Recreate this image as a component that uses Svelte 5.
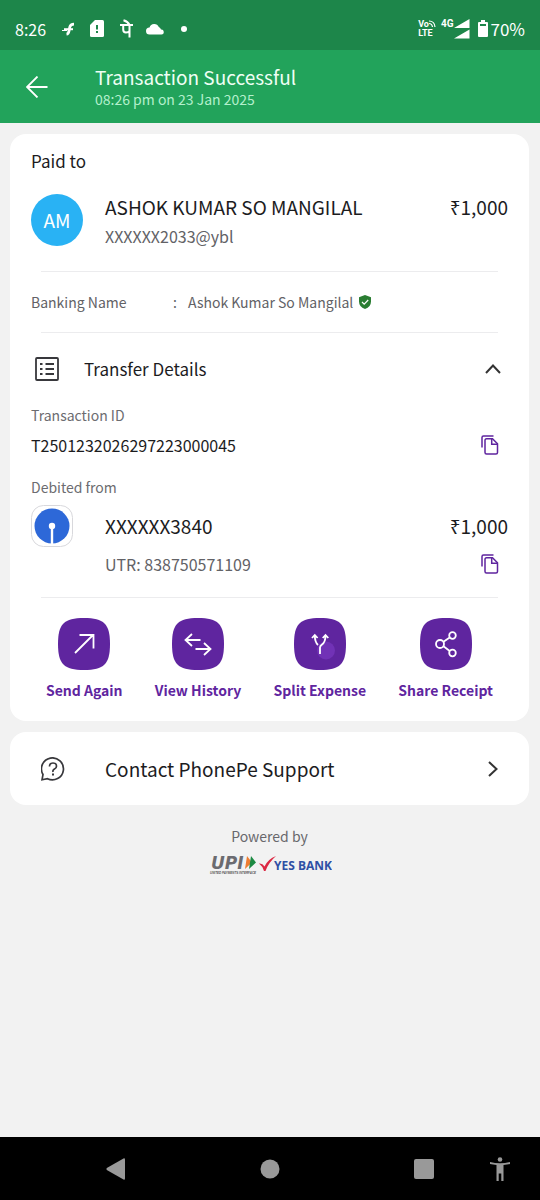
<script lang="ts">
  let open = $state(true);

  const actions = [
    { id: "send", label: "Send Again" },
    { id: "history", label: "View History" },
    { id: "split", label: "Split Expense" },
    { id: "share", label: "Share Receipt" },
  ];
</script>

{#snippet copyIcon()}
  <svg width="18" height="20" viewBox="0 0 18 20" fill="none" stroke="#5f259f" stroke-width="1.5">
    <path d="M1 12.500V2.500Q1 1 2.500 1H12.500" />
    <path d="M5.500 3.800H11.500L16.500 8.800V17.500Q16.500 19 15 19H5.500Q4 19 4 17.500V5.300Q4 3.800 5.500 3.800Z" />
    <path d="M10.700 4V9.300H16.300" />
  </svg>
{/snippet}

<div class="screen">
  <div class="status">
    <span class="clock">8:26</span>
    <svg width="14" height="14" viewBox="0 0 14 14" fill="none" stroke="#fff">
      <path d="M4.500 12.200Q6.500 12 7 9L7.800 5Q8.500 2.200 12 2.200" stroke-width="2.800" />
      <path d="M2 7.200H11" stroke-width="2" />
      <path d="M0 8.500H5" stroke-width="1" />
    </svg>
    <svg class="sim" width="14" height="17" viewBox="0 0 14 17">
      <path d="M5 0H12.500Q14 0 14 1.500V15.500Q14 17 12.500 17H1.500Q0 17 0 15.500V5Z" fill="#fff" />
      <path d="M7 5V9.500M7 11V13" stroke="#1d864a" stroke-width="2" />
    </svg>
    <svg class="pe" width="13" height="19" viewBox="0 0 13 19" fill="none" stroke="#fff" stroke-width="2">
      <path d="M0 6H13M9.500 6V18.500M3.200 6V10.500Q3.200 13.500 6 13.500 8.500 13.500 9.500 12M9.500 6Q8 2.500 3.500 1.200" />
    </svg>
    <svg class="cloud" width="18" height="12" viewBox="0 0 18 12" fill="#fff">
      <path d="M3.500 11.500A3.500 3.500 0 0 1 3.500 4.500 5 5 0 0 1 12.800 4 4 4 0 0 1 15 6.500 2.500 2.500 0 0 1 15.500 11.500Z" />
    </svg>
    <span class="dot"></span>
    <div class="signals">
      <div class="volte">
        <span>Vo<svg width="7" height="7" viewBox="0 0 7 7" fill="none" stroke="#fff" stroke-width="1.200"><path d="M0 1Q5.500 1 6 7M0 3.500Q3 3.500 3.500 7" /></svg></span>
        <span>LTE</span>
      </div>
      <span class="net">4G</span>
      <svg width="16" height="20" viewBox="0 0 16 20" fill="#fff">
        <path d="M0 9L15.500 0V9ZM0 19.500L15.500 10.500V19.500Z" />
      </svg>
      <svg class="battery" width="10" height="17" viewBox="0 0 10 17">
        <path d="M3 0H7V2H9Q10 2 10 3V16Q10 17 9 17H1Q0 17 0 16V3Q0 2 1 2H3Z" fill="#fff" />
        <path d="M2 4H8V6H2Z" fill="#1d864a" />
      </svg>
      <span class="level">70%</span>
    </div>
  </div>

  <header>
    <button class="back" aria-label="Back">
      <svg width="22" height="22" viewBox="0 0 22 22" fill="none" stroke="#fff" stroke-width="1.800">
        <path d="M21.500 11H1.500M11.500 .5L1 11 11.500 21.500" />
      </svg>
    </button>
    <div>
      <h1>Transaction Successful</h1>
      <p>08:26 pm on 23 Jan 2025</p>
    </div>
  </header>

  <main>
    <section class="card">
      <h2>Paid to</h2>
      <div class="row payee">
        <div class="avatar">AM</div>
        <div class="who">
          <div class="line">
            <span>ASHOK KUMAR SO MANGILAL</span>
            <span>₹1,000</span>
          </div>
          <div class="sub">XXXXXX2033@ybl</div>
        </div>
      </div>

      <hr />

      <div class="banking">
        <span class="key">Banking Name</span>
        <span>:</span>
        <span>Ashok Kumar So Mangilal</span>
        <svg width="12" height="14" viewBox="0 0 12 14">
          <path d="M6 0L12 2.200V6.500Q12 12 6 14Q0 12 0 6.500V2.200Z" fill="#2a7d32" />
          <path d="M3 7L5.200 9.200 9.200 5" fill="none" stroke="#fff" stroke-width="1.200" />
        </svg>
      </div>

      <hr />

      <button class="toggle" aria-expanded={open} onclick={() => (open = !open)}>
        <svg width="24" height="24" viewBox="0 0 24 24" fill="none" stroke="#38383c" stroke-width="1.800">
          <rect x="1" y="1" width="22" height="22" rx="1" />
          <path d="M5 7H7.500M5 12H7.500M5 17H7.500M10.500 7H19M10.500 12H19M10.500 17H19" />
        </svg>
        <span>Transfer Details</span>
        <svg class="chevron" class:closed={!open} width="16" height="10" viewBox="0 0 16 10" fill="none" stroke="#333" stroke-width="2">
          <path d="M1 9L8 1.500 15 9" />
        </svg>
      </button>

      {#if open}
        <div class="label">Transaction ID</div>
        <div class="txn">
          <span>T2501232026297223000045</span>
          <button class="copy" aria-label="Copy transaction ID">{@render copyIcon()}</button>
        </div>
        <div class="label">Debited from</div>
        <div class="row account">
          <svg class="bank" width="42" height="42" viewBox="0 0 42 42">
            <rect x=".5" y=".5" width="41" height="41" rx="12" fill="#fff" stroke="#d8d8dc" />
            <circle cx="21" cy="21" r="17.500" fill="#2d68d8" />
            <path d="M21 21V39" stroke="#fff" stroke-width="2.400" />
            <circle cx="21" cy="21" r="3.200" fill="#fff" />
          </svg>
          <div class="who">
            <div class="line">
              <span>XXXXXX3840</span>
              <span>₹1,000</span>
            </div>
            <div class="sub utr">
              <span>UTR: 838750571109</span>
              <button class="copy" aria-label="Copy UTR">{@render copyIcon()}</button>
            </div>
          </div>
        </div>
      {/if}

      <hr />

      <div class="actions">
        {#each actions as action (action.id)}
          <button>
            <svg width="52" height="52" viewBox="0 0 52 52" fill="none" stroke="#fff" stroke-width="1.800">
              <path d="M0 26C0 6 6 0 26 0S52 6 52 26 46 52 26 52 0 46 0 26Z" fill="#5f259f" stroke="none" />
              {#if action.id === "send"}
                <path d="M17 35L35 17M21.500 17H35.500V30.500" />
              {:else if action.id === "history"}
                <path d="M28.500 22H13.500M20 16L13.500 22 20 28M23.500 31H38.500M32 25L38.500 31 32 37" />
              {:else if action.id === "split"}
                <circle cx="32" cy="32.500" r="9" fill="#7132b6" stroke="none" />
                <path d="M26 36V29.500Q26 28 28 26.500Q31.500 24 31.500 17.500M24 27Q20.800 24 20.800 17.500M18 20L20.800 17 23.600 20M28.700 20L31.500 17 34.300 20" />
              {:else}
                <circle cx="20" cy="26" r="4" />
                <circle cx="32.500" cy="17.500" r="3.300" />
                <circle cx="32.500" cy="35" r="3.300" />
                <path d="M23.500 23.700L29.700 19.400M23.500 28.300L29.700 33" />
              {/if}
            </svg>
            <span>{action.label}</span>
          </button>
        {/each}
      </div>
    </section>

    <a class="card support" href="#support">
      <svg width="24" height="24" viewBox="0 0 24 24" fill="none" stroke="#38383c" stroke-width="1.700">
        <path d="M1 22.800L2 17.500A11 11 0 1 1 6.500 21.700Z" />
        <path d="M8.500 9.500Q8.500 6 12 6T15.500 9.200Q15.500 11 13.500 12T12 15" />
        <path d="M12 16.500V18.500" stroke-width="2" />
      </svg>
      <span>Contact PhonePe Support</span>
      <svg width="10" height="16" viewBox="0 0 10 16" fill="none" stroke="#333" stroke-width="2">
        <path d="M1 1L8.500 8 1 15" />
      </svg>
    </a>

    <footer>
      <div>Powered by</div>
      <svg width="124" height="24" viewBox="0 0 124 24">
        <text class="upi" x="3" y="16">UPI</text>
        <path d="M39 3L44 9.500 37 16Z" fill="#ee7d32" />
        <path d="M43 3L48 9.500 41 16Z" fill="#1c8a42" />
        <text class="tiny" x="2" y="21">UNITED PAYMENTS INTERFACE</text>
        <path d="M51 10.500Q54.500 10 56.500 13.500Q60 6 68 3Q60.500 9.500 57.500 18H56Q54.500 13 51 10.500Z" fill="#dc2843" />
        <text class="yes" x="66" y="17">YES BANK</text>
      </svg>
    </footer>
  </main>

  <nav>
    <button aria-label="Back">
      <svg width="20" height="22" viewBox="0 0 20 22" fill="#999">
        <path d="M.8 10L17.500 .4Q19 0 19 1.500V20.500Q19 22 17.500 21.600L.8 12Q0 11 .8 10Z" />
      </svg>
    </button>
    <button aria-label="Home">
      <svg width="20" height="20" viewBox="0 0 20 20" fill="#999"><circle cx="10" cy="10" r="9.500" /></svg>
    </button>
    <button aria-label="Recent apps">
      <svg width="20" height="20" viewBox="0 0 20 20" fill="#999"><rect width="20" height="20" rx="2" /></svg>
    </button>
    <button class="access" aria-label="Accessibility">
      <svg width="20" height="24" viewBox="0 0 20 24" fill="#999">
        <circle cx="10" cy="2.500" r="2.300" />
        <path d="M0 5Q10 7.500 20 5V7Q17 7.700 13.500 8V24H11.300V16.500H8.700V24H6.500V8Q3 7.700 0 7Z" />
      </svg>
    </button>
  </nav>
</div>

<style>
  :global(body) {
    margin: 0;
    background: #f2f2f2;
  }

  .screen {
    min-height: 100vh;
    display: flex;
    flex-direction: column;
    font-family: "Noto Sans CJK SC", "Noto Sans", sans-serif;
    font-size: 16px;
    line-height: 24px;
    color: #1c1c1e;
  }

  svg {
    display: block;
    flex: none;
  }

  button {
    padding: 0;
    border: none;
    background: none;
    font: inherit;
    color: inherit;
    cursor: pointer;
  }

  h1,
  h2,
  p {
    margin: 0;
    font-weight: 400;
  }

  .status {
    height: 50px;
    padding: 7px 15px 0;
    box-sizing: border-box;
    display: flex;
    align-items: center;
    background: #1d864a;
    color: #fff;
  }

  .clock {
    margin-right: 16px;
  }

  .sim {
    margin-left: 14px;
  }

  .pe {
    margin-left: 16px;
  }

  .cloud {
    margin-left: 13px;
  }

  .dot {
    width: 6px;
    height: 6px;
    margin-left: 17px;
    border-radius: 50%;
    background: #fff;
  }

  .signals {
    margin-left: auto;
    display: flex;
    align-items: center;
  }

  .volte {
    margin-right: 5px;
    font: bold 9px/9px Roboto, sans-serif;
  }

  .volte span {
    display: flex;
  }

  .net {
    align-self: flex-start;
    margin-right: 1px;
    font: bold 10px/14px Roboto, sans-serif;
  }

  .battery {
    margin: 0 2px 0 8px;
  }

  .level {
    font-size: 17px;
  }

  header {
    display: flex;
    align-items: center;
    gap: 47px;
    height: 73px;
    padding: 0 26px;
    background: #22a35b;
    color: #effff5;
  }

  h1 {
    font-size: 19px;
  }

  header p {
    font-size: 14px;
    line-height: 20px;
    color: #b4f0cd;
  }

  main {
    flex: 1;
    padding: 11px 11px 20px 10px;
  }

  .card {
    display: block;
    padding: 15px 21px 0;
    border-radius: 16px;
    background: #fff;
  }

  h2 {
    font-size: 17px;
  }

  .row {
    display: flex;
  }

  .payee {
    margin: 21px 0 19px;
    gap: 22px;
  }

  .avatar {
    width: 52px;
    height: 52px;
    flex: none;
    border-radius: 50%;
    background: #29b2f4;
    color: #fff;
    font-size: 19px;
    line-height: 52px;
    text-align: center;
  }

  .who {
    flex: 1;
  }

  .line {
    display: flex;
    justify-content: space-between;
    font-size: 19px;
    line-height: 28px;
  }

  .payee .line {
    line-height: 26px;
  }

  .sub {
    font-size: 16px;
    line-height: 30px;
    color: #626266;
  }

  .payee .sub {
    line-height: 32px;
  }

  hr {
    height: 1px;
    margin: 0 10px;
    border: none;
    background: #ececee;
  }

  .banking {
    display: flex;
    align-items: center;
    padding: 18px 0;
    font-size: 14px;
    color: #626266;
  }

  .key {
    width: 142px;
  }

  .banking span:nth-child(2) {
    width: 15px;
  }

  .banking svg {
    margin-left: 6px;
  }

  .toggle {
    width: 100%;
    display: flex;
    align-items: center;
    padding: 24px 7px 22px 4px;
    font-size: 17px;
  }

  .toggle span {
    margin-left: 25px;
  }

  .chevron {
    margin-left: auto;
  }

  .closed {
    transform: rotate(180deg);
  }

  .label {
    font-size: 14px;
    color: #6c6c70;
  }

  .txn {
    display: flex;
    align-items: center;
    justify-content: space-between;
    padding: 6px 0 18px;
  }

  .copy {
    margin-right: 9px;
  }

  .account {
    padding: 6px 0 18px;
    gap: 32px;
  }

  .account .line {
    padding: 7px 0 9px;
  }

  .utr {
    display: flex;
    align-items: center;
    justify-content: space-between;
  }

  .actions {
    display: flex;
    justify-content: space-between;
    padding: 20px 15px 19px;
    font-weight: 700;
    color: #5f259f;
  }

  .actions button {
    display: flex;
    flex-direction: column;
    align-items: center;
    gap: 8px;
    font-size: 14px;
  }

  .support {
    display: flex;
    align-items: center;
    margin-top: 11px;
    padding: 23px 31px 22px;
    font-size: 19px;
    line-height: 28px;
    color: inherit;
    text-decoration: none;
  }

  .support span {
    flex: 1;
    margin-left: 40px;
  }

  footer {
    display: flex;
    flex-direction: column;
    align-items: center;
    gap: 5px;
    padding-top: 19px;
    font-size: 14px;
    color: #68686c;
  }

  .upi {
    font: italic bold 17px "DejaVu Sans", sans-serif;
    fill: #6b6b70;
  }

  .tiny {
    font: italic bold 3px "Liberation Sans", sans-serif;
    fill: #555;
  }

  .yes {
    font: bold 12px "Open Sans", sans-serif;
    fill: #2e50a5;
  }

  nav {
    display: flex;
    align-items: center;
    justify-content: space-between;
    height: 63px;
    padding: 0 30px 0 106px;
    background: #000;
  }

  .access {
    margin-left: -78px;
  }
</style>
